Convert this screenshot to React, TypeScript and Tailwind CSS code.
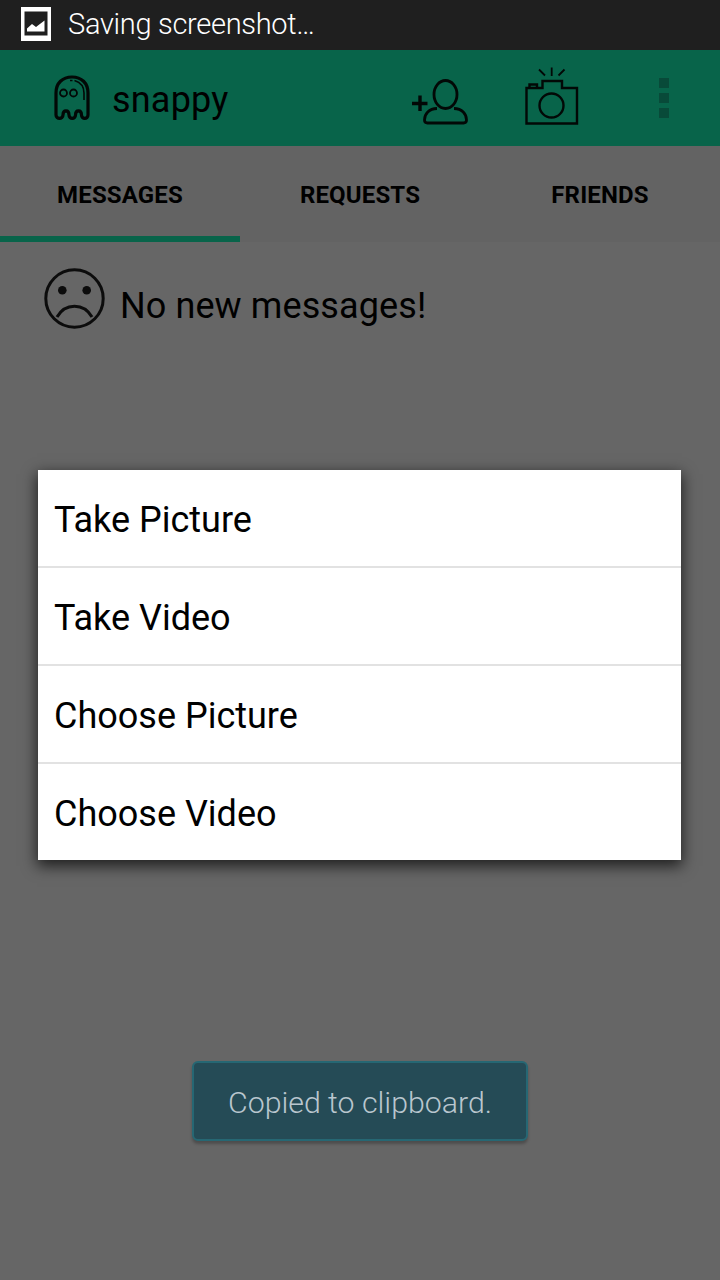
import type { ReactNode } from "react";

const tabs = ["MESSAGES", "REQUESTS", "FRIENDS"];
const options = ["Take Picture", "Take Video", "Choose Picture", "Choose Video"];

function PictureIcon() {
  return (
    <svg width="30" height="34" viewBox="0 0 30 34" aria-hidden="true">
      <rect width="30" height="34" fill="#fff" />
      <rect x="3.5" y="4.5" width="23" height="24" fill="#1f1f1f" />
      <path d="M6 24.500v-3l5-4.500 4 3 8.500-6.500v11z" fill="#fff" />
    </svg>
  );
}

function GhostIcon() {
  return (
    <svg width="36" height="46" viewBox="0 0 36 46" fill="none" stroke="#020806" aria-hidden="true">
      <path
        d="M2 40V18C2 8 8.500 2 18 2s16 6 16 16v22c0 4.500-6.500 4.500-6.500 0 0-5.500-6-5.500-6 0 0 4.500-6.500 4.500-6.500 0 0-5.500-6-5.500-6 0 0 4.500-7 4.500-7 0z"
        strokeWidth="3.200"
        strokeLinejoin="round"
      />
      <circle cx="9.500" cy="18" r="3.500" strokeWidth="1.800" />
      <circle cx="19.500" cy="18" r="3.500" strokeWidth="1.800" />
      <path d="M16 5.500h2.500M20.500 5.500C27 7.500 30 12.500 30 18v7" strokeWidth="1.600" />
    </svg>
  );
}

function AddFriendIcon() {
  return (
    <svg width="56" height="46" viewBox="0 0 56 46" fill="none" stroke="#020806" strokeWidth="2.800" aria-hidden="true">
      <path d="M0 24.500h15.500M8 16.500v15.500" strokeWidth="3.400" />
      <ellipse cx="33.500" cy="15.500" rx="11.500" ry="14" />
      <path d="M25 29.500C17 29.500 12.500 35 12.500 41c0 2.200.8 3 3 3h36c2.200 0 3-.8 3-3 0-6-4.500-11.500-12.500-11.500" />
    </svg>
  );
}

function CameraIcon() {
  return (
    <svg width="54" height="58" viewBox="0 0 54 58" fill="none" stroke="#020806" strokeWidth="2.400" aria-hidden="true">
      <path d="M1.500 21h16v-7h19.500v7h15v35.500h-50.500z" />
      <path d="M4.500 20.500v-3h7.500v3" />
      <circle cx="26.500" cy="38.500" r="12" />
      <path d="M26.700.5v8.500M14 2.500l6 6M39.500 2.500l-6 6" strokeWidth="1.800" />
    </svg>
  );
}

function SadFace() {
  return (
    <svg width="62" height="62" viewBox="0 0 62 62" fill="none" stroke="#0c0c0c" strokeWidth="3" aria-hidden="true">
      <circle cx="30.500" cy="30.500" r="28.700" />
      <circle cx="18.300" cy="22.300" r="4.300" fill="#0c0c0c" stroke="none" />
      <circle cx="42.700" cy="22.300" r="4.300" fill="#0c0c0c" stroke="none" />
      <path d="M13 49c8-14.500 27-14.500 35 0" />
    </svg>
  );
}

function Toast({ children }: { children: ReactNode }) {
  return (
    <div className="absolute top-[1061px] left-[192px] flex h-20 w-[336px] items-center justify-center rounded-md border-2 border-[#266773] bg-[#254b56] pt-1 shadow-[0_3px_3px_rgba(0,0,0,0.25)]">
      <span className="text-[30.300px] leading-none font-light whitespace-nowrap text-[#b9c6ce]">
        {children}
      </span>
    </div>
  );
}

export default function App() {
  return (
    <div className="relative h-[1280px] w-[720px] overflow-hidden bg-[#666666] font-['Roboto',sans-serif] text-black">
      <div className="flex h-[50px] items-center bg-[#1f1f1f] pb-0.5 pl-[21px]">
        <PictureIcon />
        <span className="mt-px ml-[17px] text-[29px] leading-none font-light tracking-[-0.300px] text-white">
          Saving screenshot…
        </span>
      </div>

      <header className="flex h-24 items-start bg-[#08644a]">
        <div className="flex w-[412px] items-start pt-[25px] pl-[54px]">
          <GhostIcon />
          <h1 className="mt-[7px] ml-[22px] text-[36px] leading-none font-normal tracking-[0.200px]">snappy</h1>
        </div>
        <button type="button" aria-label="Add friend" className="mt-[29px]">
          <AddFriendIcon />
        </button>
        <button type="button" aria-label="Camera" className="mt-[17px] ml-[57px]">
          <CameraIcon />
        </button>
        <button type="button" aria-label="More" className="mt-7 ml-20 flex flex-col gap-[5px]">
          <span className="size-2.5 bg-[#084a39]" />
          <span className="size-2.5 bg-[#084a39]" />
          <span className="size-2.5 bg-[#084a39]" />
        </button>
      </header>

      <nav className="grid h-24 grid-cols-3 bg-[#636363]">
        {tabs.map((tab, i) => (
          <button
            key={tab}
            type="button"
            className={`border-b-6 pt-2 text-2xl font-bold tracking-[0.150px] ${
              i === 0 ? "border-[#08644a]" : "border-transparent"
            }`}
          >
            {tab}
          </button>
        ))}
      </nav>

      <main className="flex items-start pt-[26px] pl-11">
        <SadFace />
        <p className="mt-5 ml-3.5 text-[36px] leading-none tracking-[0.100px]">No new messages!</p>
      </main>

      <ul className="absolute top-[470px] left-[38px] w-[643px] divide-y-2 divide-[#e2e2e2] bg-white shadow-[0_5px_14px_1px_rgba(0,0,0,0.7)]">
        {options.map((option) => (
          <li key={option} className="flex h-[98px] items-center pt-1 pl-4 text-[36px] last:h-24">
            {option}
          </li>
        ))}
      </ul>

      <Toast>Copied to clipboard.</Toast>
    </div>
  );
}
